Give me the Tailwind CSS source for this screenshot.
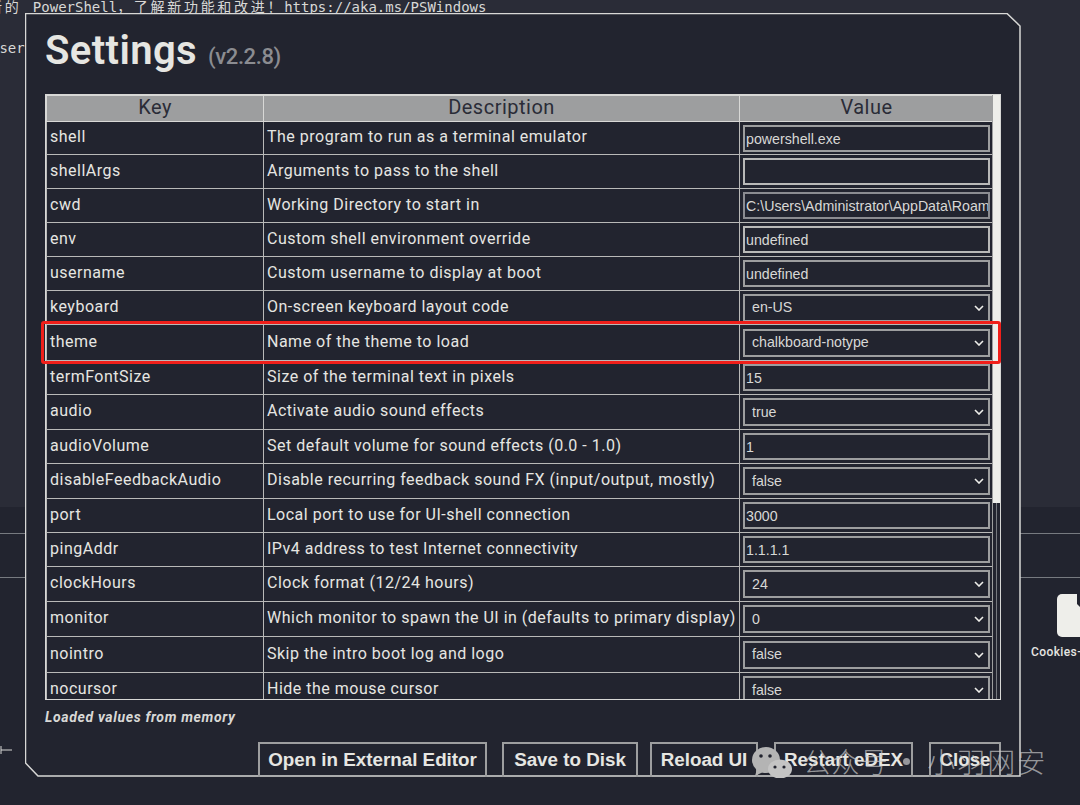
<!DOCTYPE html>
<html lang="en">

<head>
    <meta charset="UTF-8">
    <title>Settings</title>
    <script src="https://cdn.jsdelivr.net/npm/@tailwindcss/browser@4"></script>
</head>

<body>
    <div class="relative w-[1080px] h-[805px] overflow-hidden bg-[#22242f] text-[#e6e6e2] font-['Roboto',sans-serif]">
        <!-- Terminal behind the modal -->
        <div class="h-[507px] bg-[#2a2c37] text-[#d8d8d6] font-['DejaVu_Sans_Mono','Noto_Sans_CJK_SC',monospace] text-[14px] leading-[16px]">
            <p class="whitespace-nowrap -ml-[12px] -translate-y-px"><span class="tracking-[2.7px]">新的</span> <span class="ml-[3px]">PowerShell</span><span class="tracking-[2.7px]">，了解新功能和改进！</span>https://aka.ms/PSWindows</p>
            <p class="mt-[24px] -ml-[9px]">user</p>
        </div>
        <div class="h-[45px] border-t border-b border-[#777a80] mt-[26px]"></div>

        <!-- Desktop file behind the modal -->
        <div class="absolute left-[1031px] top-[594px] flex flex-col items-start">
            <svg class="ml-[26px]" width="44" height="43" viewBox="0 0 44 43">
                <rect width="44" height="43" rx="5" fill="#eeeeea" />
                <path d="M20 0H44V34L20 10Z" fill="#22242f" />
            </svg>
            <span class="mt-[8px] text-[12px] leading-[14px] font-medium tracking-[0.4px] whitespace-nowrap">Cookies-</span>
        </div>
        <svg class="absolute left-0 top-[746px]" width="12" height="8" viewBox="0 0 12 8"><path d="M1 0V8M1 4H12" stroke="#d8d8d6" stroke-width="1" fill="none" /></svg>

        <!-- Modal -->
        <div class="absolute left-[25px] top-[13px] w-[996px] h-[764px]">
            <svg class="absolute inset-0" width="996" height="764" viewBox="0 0 996 764">
                <path d="M0.5 0.5H982L995 13V763H13L0.5 750Z" fill="#22242f" stroke="#d8d8d6" stroke-width="1.5" />
            </svg>
            <div class="relative pl-[20px] pt-[13px]">
                <h1 class="h-[50px] flex items-baseline text-[40px] leading-[50px] font-semibold tracking-[0.4px]">Settings<span class="ml-[11px] text-[22px] font-medium tracking-[-0.4px] text-[#8b8c91]">(v2.2.8)</span></h1>

                <div class="mt-[18px] w-[956px] h-[606px] overflow-hidden border border-[#d8d8d6] relative">
                    <table class="w-[948px] table-fixed border-collapse text-[16px] tracking-[0.5px]">
                        <thead>
                            <tr class="h-[26px] bg-[#9d9e9f] text-[#2a2c37] text-[20px] leading-[20px]">
                                <th class="w-[217px] pb-[3px] font-normal border border-[#d8d8d6]">Key</th>
                                <th class="w-[476px] pb-[3px] font-normal border border-[#d8d8d6]">Description</th>
                                <th class="pb-[3px] font-normal border border-[#d8d8d6]">Value</th>
                            </tr>
                        </thead>
                        <tbody class="[&_td]:border [&_td]:border-[#b9b9b8] [&_td]:px-[3px] [&_td]:whitespace-nowrap [&_td:not(:last-child)]:pb-[2px]">
                            <tr class="h-[33px]"><td>shell</td><td>The program to run as a terminal emulator</td><td><div class="h-[27px] border-2 border-[#9d9e9f] px-[1px] font-['Liberation_Sans'] text-[14.2px] tracking-normal leading-[24px] text-[#d8d8d6]">powershell.exe</div></td></tr>
                            <tr class="h-[34px]"><td>shellArgs</td><td>Arguments to pass to the shell</td><td><div class="h-[27px] border-2 border-[#b9b9b8]"></div></td></tr>
                            <tr class="h-[34px]"><td>cwd</td><td>Working Directory to start in</td><td><div class="h-[27px] border-2 border-[#8b8c91] px-[1px] font-['Liberation_Sans'] text-[14.2px] tracking-normal leading-[24px] text-[#d8d8d6] overflow-hidden whitespace-nowrap">C:\Users\Administrator\AppData\Roaming\eDEX-UI</div></td></tr>
                            <tr class="h-[34px]"><td>env</td><td>Custom shell environment override</td><td><div class="h-[27px] border-2 border-[#b9b9b8] px-[1px] font-['Liberation_Sans'] text-[14.2px] tracking-normal leading-[24px] text-[#d8d8d6]">undefined</div></td></tr>
                            <tr class="h-[34px]"><td>username</td><td>Custom username to display at boot</td><td><div class="h-[27px] border-2 border-[#9d9e9f] px-[1px] font-['Liberation_Sans'] text-[14.2px] tracking-normal leading-[24px] text-[#d8d8d6]">undefined</div></td></tr>
                            <tr class="h-[34px]"><td>keyboard</td><td>On-screen keyboard layout code</td><td><div class="h-[28px] border-2 border-[#9d9e9f] pl-[7px] pr-[4px] font-['Liberation_Sans'] text-[14.2px] tracking-normal leading-[25px] text-[#d8d8d6] flex justify-between items-center">en-US<svg width="10" height="6" viewBox="0 0 10 6"><path d="M1 1l4 4 4-4" fill="none" stroke="#eeeeea" stroke-width="1.6" /></svg></div></td></tr>
                            <tr class="h-[36px]"><td>theme</td><td>Name of the theme to load</td><td><div class="h-[28px] border-2 border-[#9d9e9f] pl-[7px] pr-[4px] font-['Liberation_Sans'] text-[14.2px] tracking-normal leading-[25px] text-[#d8d8d6] flex justify-between items-center">chalkboard-notype<svg width="10" height="6" viewBox="0 0 10 6"><path d="M1 1l4 4 4-4" fill="none" stroke="#eeeeea" stroke-width="1.6" /></svg></div></td></tr>
                            <tr class="h-[34px]"><td>termFontSize</td><td>Size of the terminal text in pixels</td><td><div class="h-[27px] border-2 border-[#9d9e9f] px-[1px] font-['Liberation_Sans'] text-[14.2px] tracking-normal leading-[24px] text-[#d8d8d6]">15</div></td></tr>
                            <tr class="h-[35px]"><td>audio</td><td>Activate audio sound effects</td><td><div class="h-[28px] border-2 border-[#9d9e9f] pl-[7px] pr-[4px] font-['Liberation_Sans'] text-[14.2px] tracking-normal leading-[25px] text-[#d8d8d6] flex justify-between items-center">true<svg width="10" height="6" viewBox="0 0 10 6"><path d="M1 1l4 4 4-4" fill="none" stroke="#eeeeea" stroke-width="1.6" /></svg></div></td></tr>
                            <tr class="h-[34px]"><td>audioVolume</td><td>Set default volume for sound effects (0.0 - 1.0)</td><td><div class="h-[27px] border-2 border-[#9d9e9f] px-[1px] font-['Liberation_Sans'] text-[14.2px] tracking-normal leading-[24px] text-[#d8d8d6]">1</div></td></tr>
                            <tr class="h-[35px]"><td>disableFeedbackAudio</td><td>Disable recurring feedback sound FX (input/output, mostly)</td><td><div class="h-[28px] border-2 border-[#9d9e9f] pl-[7px] pr-[4px] font-['Liberation_Sans'] text-[14.2px] tracking-normal leading-[25px] text-[#d8d8d6] flex justify-between items-center">false<svg width="10" height="6" viewBox="0 0 10 6"><path d="M1 1l4 4 4-4" fill="none" stroke="#eeeeea" stroke-width="1.6" /></svg></div></td></tr>
                            <tr class="h-[34px]"><td>port</td><td>Local port to use for UI-shell connection</td><td><div class="h-[27px] border-2 border-[#9d9e9f] px-[1px] font-['Liberation_Sans'] text-[14.2px] tracking-normal leading-[24px] text-[#d8d8d6]">3000</div></td></tr>
                            <tr class="h-[34px]"><td>pingAddr</td><td>IPv4 address to test Internet connectivity</td><td><div class="h-[27px] border-2 border-[#9d9e9f] px-[1px] font-['Liberation_Sans'] text-[14.2px] tracking-normal leading-[24px] text-[#d8d8d6]">1.1.1.1</div></td></tr>
                            <tr class="h-[35px]"><td>clockHours</td><td>Clock format (12/24 hours)</td><td><div class="h-[28px] border-2 border-[#9d9e9f] pl-[7px] pr-[4px] font-['Liberation_Sans'] text-[14.2px] tracking-normal leading-[25px] text-[#d8d8d6] flex justify-between items-center">24<svg width="10" height="6" viewBox="0 0 10 6"><path d="M1 1l4 4 4-4" fill="none" stroke="#eeeeea" stroke-width="1.6" /></svg></div></td></tr>
                            <tr class="h-[35px]"><td>monitor</td><td>Which monitor to spawn the UI in (defaults to primary display)</td><td><div class="h-[28px] border-2 border-[#9d9e9f] pl-[7px] pr-[4px] font-['Liberation_Sans'] text-[14.2px] tracking-normal leading-[25px] text-[#d8d8d6] flex justify-between items-center">0<svg width="10" height="6" viewBox="0 0 10 6"><path d="M1 1l4 4 4-4" fill="none" stroke="#eeeeea" stroke-width="1.6" /></svg></div></td></tr>
                            <tr class="h-[36px]"><td>nointro</td><td>Skip the intro boot log and logo</td><td><div class="h-[28px] border-2 border-[#9d9e9f] pl-[7px] pr-[4px] font-['Liberation_Sans'] text-[14.2px] tracking-normal leading-[25px] text-[#d8d8d6] flex justify-between items-center">false<svg width="10" height="6" viewBox="0 0 10 6"><path d="M1 1l4 4 4-4" fill="none" stroke="#eeeeea" stroke-width="1.6" /></svg></div></td></tr>
                            <tr class="h-[35px]"><td>nocursor</td><td>Hide the mouse cursor</td><td><div class="h-[28px] border-2 border-[#9d9e9f] pl-[7px] pr-[4px] font-['Liberation_Sans'] text-[14.2px] tracking-normal leading-[25px] text-[#d8d8d6] flex justify-between items-center">false<svg width="10" height="6" viewBox="0 0 10 6"><path d="M1 1l4 4 4-4" fill="none" stroke="#eeeeea" stroke-width="1.6" /></svg></div></td></tr>
                        </tbody>
                    </table>
                    <!-- Scrollbar -->
                    <div class="absolute right-0 top-0 bottom-0 w-[8px] bg-[#22242f] border-l border-[#9d9e9f]">
                        <div class="h-[408px] bg-[#eeeeea]"></div>
                        <div class="ml-[3px] w-px h-[198px] bg-[#777a80]"></div>
                    </div>
                </div>

                <p class="mt-[8px] text-[14px] leading-[18px] italic font-bold tracking-[0.65px] text-[#d8d8d6]">Loaded values from memory</p>

                <div class="absolute left-[233px] top-[729px] flex font-['Liberation_Sans'] font-bold text-[18.8px] text-[#e6e6e2]">
                    <button class="w-[229px] h-[35px] border-2 border-b-0 border-[#9d9e9f]">Open in External Editor</button>
                    <button class="ml-[15px] w-[136px] h-[35px] border-2 border-b-0 border-[#9d9e9f]">Save to Disk</button>
                    <button class="ml-[12px] w-[108px] h-[35px] border-2 border-b-0 border-[#9d9e9f]">Reload UI</button>
                    <button class="ml-[16px] w-[139px] h-[35px] border-2 border-b-0 border-[#9d9e9f]">Restart eDEX</button>
                    <button class="ml-[16px] w-[72px] h-[35px] border-2 border-b-0 border-[#9d9e9f]">Close</button>
                </div>
            </div>
        </div>

        <!-- Highlight around the theme row -->
        <div class="absolute left-[41px] top-[321px] w-[960px] h-[43px] rounded-[3px] border-[3px] border-[#f01f1a]"></div>

        <!-- Watermark -->
        <div class="absolute left-[752px] top-[742px] flex items-center text-[#c9c9c9]/70 font-['Noto_Sans_CJK_SC',sans-serif] font-light text-[28px] leading-[38px]">
            <svg width="40" height="33" viewBox="0 0 40 33">
                <ellipse cx="14" cy="15" rx="14" ry="13" fill="#b4b4b4" />
                <path d="M5 24L3 31L11 27Z" fill="#b4b4b4" />
                <ellipse cx="28" cy="24" rx="12" ry="9.5" fill="#c4c4c4" />
                <circle cx="23" cy="22" r="1.6" fill="#22242f" />
                <circle cx="32" cy="22" r="1.6" fill="#22242f" />
                <circle cx="9" cy="11" r="1.8" fill="#22242f" />
                <circle cx="18" cy="11" r="1.8" fill="#22242f" />
            </svg>
            <span class="ml-[11px] tracking-[0.4px]">公众号</span>
            <span class="ml-[15px] w-[7px] h-[7px] rounded-full bg-[#c9c9c9]/70"></span>
            <span class="ml-[17px] tracking-[2px]">小羽网安</span>
        </div>
    </div>
</body>

</html>
